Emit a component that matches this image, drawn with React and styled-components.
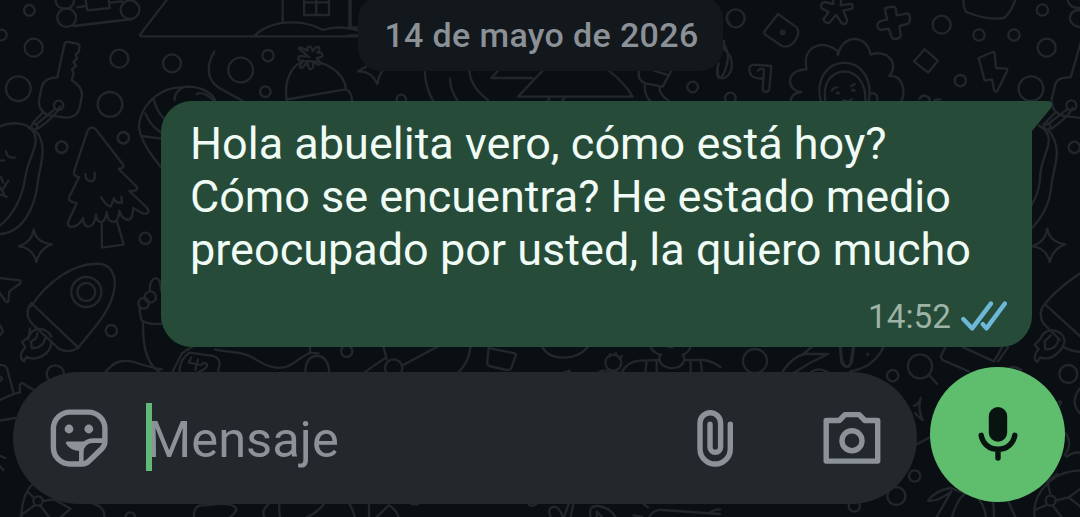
import React from 'react'
import styled, { createGlobalStyle } from 'styled-components'

const GlobalStyle = createGlobalStyle`
  * {
    box-sizing: border-box;
  }
  body {
    margin: 0;
    background: #0a0f13;
    font-family: Roboto, 'Liberation Sans', sans-serif;
  }
`

// Wallpaper patches. Each one is drawn on a grid three times finer than the page.
const patches = [
  {
    x: 0, y: 0,
    rings: [
      [88, 31, 16], [4, 105, 16], [101, 143, 27], [55, 266, 37], [358, 176, 27],
      [516, 190, 27], [722, 210, 37], [804, 167, 17], [796, 275, 16], [330, 313, 37],
      [370, 414, 17], [185, 442, 17], [200, 53, 28], [390, 29, 28], [176, 316, 14], [103, 380, 9],
    ],
    lines: [
      'M166 -4C166 16 178 26 196 26S224 12 222 -4M232 22L258 18M328 8L366 4M220 78L398 57',
      'M256 -4L262 31L329 24L326 -4',
      'M503 -4L420 104Q418 109 426 109H1078M848 -4V68M1048 -4V78M764 107Q806 66 880 67Q930 68 968 90Q1020 74 1078 92',
      'M912 -4V45H987V-4M949 -4V45M912 7H987',
      'M172 232L193 134Q195 124 206 126L231 131Q241 134 238 144L236 156L227 164L231 176L220 186L229 197L216 208L221 221L215 241Q247 260 246 286L239 324Q229 354 200 353L146 346Q114 332 117 300L126 258Q136 232 172 232Z',
      'M166 326L108 374M130 336L98 369M180 320C168 344 142 366 114 386',
      'M643 155C616 200 622 242 658 264L730 304',
      'M860 302C850 236 880 188 916 184C970 178 1034 216 1038 268M862 298L1036 268Q1056 274 1056 302',
      'M928 172L904 152Q890 144 902 142L922 152L923 142Q931 136 936 146L938 154L948 142Q962 136 957 152L952 158L964 158Q972 170 960 172L950 174L962 188Q960 200 946 190L938 186L940 202Q930 214 926 202L922 188L908 202Q894 206 902 194L910 182L898 182Q888 170 904 168L916 170',
      'M482 500C432 440 408 392 420 358C436 302 486 262 544 262C590 254 630 272 646 300M524 300C522 276 544 260 568 260M590 282C606 274 628 286 640 302M462 300Q470 334 492 356M436 340Q452 378 484 398M424 408L486 416',
    ],
  },
  {
    x: 0, y: 120,
    rings: [
      [185, 81, 17], [370, 53, 17], [436, 355, 17], [334, 632, 17], [259, 516, 45],
      [259, 516, 27], [166, 762, 26], [431, 550, 16], [451, 531, 17],
    ],
    lines: [
      'M-4 20C40 2 84 8 102 38C120 72 84 120 78 160C70 220 50 278 -4 320M112 38C144 84 118 142 114 184C106 258 70 342 -4 342M86 24L112 38',
      'M18 94Q20 114 44 113M-4 122L12 121M2 170L10 188M25 182L8 208M-4 196L12 222M20 230L2 224',
      'M263 32Q275 14 289 30L368 132Q376 144 356 147L408 198Q420 214 388 213L440 262Q454 282 430 281L399 264Q400 290 388 299Q366 302 358 272Q356 304 341 306Q322 306 320 276Q316 306 301 306Q290 304 288 284Q284 318 265 320Q249 318 249 294Q236 320 213 321Q198 318 206 302L230 250L212 244Q202 238 211 224L237 172L224 166Q220 158 226 142Z',
      'M256 162Q256 184 276 184Q287 178 284 158M303 232Q318 256 332 260L342 234Q344 250 366 248L364 230',
      'M305 310L306 383L371 374L351 304',
      'M101 328Q108 368 156 373Q120 384 109 426Q98 382 56 379Q96 366 101 328Z',
      'M-4 474L60 481Q66 486 58 492L28 514L25 544Q20 550 14 540L-4 514M-4 614Q8 622 8 636L-4 650',
      'M94 558C140 488 222 424 304 432C344 440 350 486 340 520C326 582 276 630 235 683L94 549Q70 582 97 612L176 686Q208 702 235 683',
      'M154 650C140 620 94 616 84 658L87 650L66 666L76 682C58 700 60 718 72 724L80 710C100 724 150 710 155 666M87 648L90 626M95 684L93 664C104 660 112 652 112 640M95 684Q128 688 137 652',
      'M418 562L423 598Q440 616 486 611M429 604C428 670 436 730 478 756M450 514C446 482 468 460 480 486L484 514',
      'M312 762C344 716 378 716 420 732Q458 744 486 748',
    ],
  },
  {
    x: 0, y: 350,
    rings: [[1040, 4, 17], [114, 453, 14], [391, 501, 14]],
    lines: [
      'M-4 46Q18 42 22 58L40 126M-4 78Q16 84 -4 96M-4 152Q50 126 60 128Q54 84 80 108L102 120M-4 212L46 204M-4 316L16 324M-4 344L10 360',
      'M64 505C64 450 80 420 98 402M102 444L84 426M128 453L162 448M104 466L62 496M120 466L150 505M280 462Q314 468 314 505M162 448L212 476L178 505',
      'M582 505Q578 462 614 466Q704 452 710 480Q700 496 684 505M806 462Q780 484 796 505M838 462Q836 492 842 505M972 462Q948 492 914 505M1048 462Q1062 484 1064 505',
      'M516 68L546 10L580 -12M568 8L640 18Q662 26 658 44L654 68M568 8Q540 26 538 66M645 -2C690 10 726 2 760 24C806 54 848 70 896 28L930 8M916 68C916 34 928 20 948 18Q984 16 988 68M930 8V-8M930 8L956 10',
      'M574 22L566 38L596 44M594 28L586 60M602 46Q612 34 620 42Q628 52 596 66L618 72',
    ],
  },
  {
    x: 360, y: 330,
    rings: [[101, 114, 26], [760, 98, 24]],
    lines: [
      'M12 128L78 82M70 48L80 88M128 106L236 48M332 48Q326 100 294 128M386 54L464 70Q470 74 466 80L454 114Q450 122 440 120L388 108Q380 106 382 94Z',
      'M546 50C570 94 648 94 684 50M714 128Q730 114 776 128M606 130L628 122L632 130M748 80L750 72M764 76L768 68M778 86L786 78',
      'M784 128Q802 94 840 92L900 90M872 50Q882 72 904 74M992 50Q986 68 970 74M900 76Q890 104 928 114Q966 118 974 88L968 74M922 50L938 52M974 90H1032Q1064 96 1082 112M860 92L856 128M890 96V128M992 92V128M1022 94L1026 128',
      'M27 522V561M50 561L86 526Q110 540 116 561M154 522L174 523M506 524L518 528L530 522M572 561Q560 534 582 530Q598 530 608 561M626 522L612 561M640 522L632 561M692 561Q684 526 714 528Q750 532 766 561M710 561V544L726 561M820 556L846 561M850 522L864 532M868 561Q880 538 908 540L1080 552M1050 548Q1060 538 1080 538',
    ],
  },
  {
    x: 350, y: 0,
    rings: [[1028, 261, 16], [154, 298, 14]],
    lines: [
      'M2 -4V80M-4 82H26M-4 106H26M24 214Q64 212 82 252Q86 226 98 212M24 214L48 200',
      'M224 212Q226 264 250 304M300 236Q300 270 324 304M358 212Q362 262 414 300M444 212L424 234H546M578 212L504 290H848Q824 248 776 212M598 292L594 304M644 292L636 304',
      'M868 212Q860 240 886 250L938 260L964 212M912 212L950 224M884 256Q884 290 902 304M928 262Q930 286 956 302M1134 38Q1126 60 1140 72M1118 128Q1142 156 1130 196Q1116 244 1104 232Q1098 220 1106 190',
    ],
  },
  {
    x: 700, y: 0,
    rings: [
      [107, 55, 27], [725, 74, 27], [837, 105, 17], [942, 105, 17], [1027, 30, 17],
      [781, 242, 17], [993, 266, 37], [91, 294, 16], [248, 97, 5],
      [1114, 316, 15], [1040, 143, 27], [1123, 442, 17], [1042, 380, 9],
    ],
    lines: [
      'M234 42L192 96Q192 102 198 106L246 138Q270 146 288 118Q300 96 290 82Z',
      'M399 -4L400 12L374 6Q358 10 366 26L386 36L370 58Q376 72 388 68L408 44L424 68Q436 80 442 62L430 32L456 26Q462 10 448 12L422 16L424 -4',
      'M556 24L580 20Q588 22 588 30L590 46L622 40Q630 44 630 56Q630 68 622 72L598 78L602 104Q602 114 592 116Q578 120 574 110L566 86L542 90Q532 88 532 76Q534 66 540 64L562 58L556 36Z',
      'M790 -4Q790 28 800 36Q860 62 912 54Q930 42 948 -4',
      'M674 148L714 182L684 218L642 184Z',
      'M836 174L878 156Q884 156 884 162L888 204L920 206Q924 208 920 216L892 272Q886 278 882 270L876 238L854 242Z',
      'M150 218Q142 194 164 194L214 198L208 266Q206 276 198 276Q188 276 188 266L190 236Q152 236 150 218ZM190 236L192 210Q184 202 174 212',
      'M72 122V148C102 168 104 216 74 234Q48 242 54 196',
      'M304 276C262 274 250 210 320 208C306 146 356 114 412 152Q414 160 414 166C424 104 500 98 512 164C560 146 600 190 568 228C604 224 620 268 604 304M304 276Q272 280 272 304',
      'M362 304C346 238 380 190 434 188C490 190 518 246 506 302M376 304C366 242 400 214 436 214C476 218 498 254 496 304M508 282Q534 274 532 300M396 272Q398 262 412 262M454 258L464 252M410 280Q414 276 418 280M456 272Q460 266 464 272M430 300Q444 308 456 298',
      'M658 296Q670 278 688 294Q690 304 686 304M704 300L720 298',
      'M1102 -4Q1106 26 1142 24M1142 30Q1108 30 1110 58Q1114 78 1142 82M1142 128L1112 232Q1066 230 1064 262L1054 300Q1056 340 1092 348L1142 354M1104 326L1042 374M1068 336L1030 374M1118 324Q1100 356 1054 386',
    ],
  },
  {
    x: 980, y: 90,
    rings: [],
    lines: [
      'M176 106Q196 116 204 136C216 170 178 210 180 270Q176 310 154 346M206 122Q222 140 226 160C240 200 216 250 214 290Q206 364 154 416',
      'M202 416Q208 456 256 463Q220 474 209 516Q198 472 156 469Q196 456 202 416Z',
      'M304 548Q240 588 194 642L304 742M194 642Q172 670 190 700L240 750',
    ],
  },
  {
    x: 840, y: 270,
    rings: [
      [240, 289, 36], [158, 317, 17], [685, 312, 27], [224, 618, 17], [169, 678, 27],
      [43, 708, 17], [632, 692, 15], [83, 253, 2],
    ],
    lines: [
      'M268 316L291 341M0 232L4 278Q22 306 36 276L42 232M130 232Q100 294 30 304',
      'M316 232L302 260Q304 268 312 272L386 304M370 232L462 274L486 232M504 232L474 274',
      'M504 296Q520 284 544 300',
      'M674 212C670 178 616 166 602 206L584 224L596 238Q574 264 592 276L600 262C636 276 670 240 674 212M616 238Q650 240 656 206M616 238L614 214L632 196M672 232Q692 244 724 246',
      'M222 408Q240 400 242 384M242 384Q232 412 248 450M248 450Q240 446 226 430M232 522L270 502M654 396Q670 390 658 408M724 350Q686 394 720 430M674 556Q700 520 676 488M680 560Q706 542 724 550',
      'M264 692Q288 660 332 654L376 670M264 692Q292 696 334 664M334 664L290 741M376 670Q350 690 336 741M418 690Q434 710 438 741M460 696L462 741M504 692L526 741M584 741C574 670 640 600 724 602M632 678L622 634L652 612M646 692L686 682L724 654M622 704L584 720M638 706L664 741M686 682L724 712',
    ],
  },
  {
    x: 560, y: 340,
    rings: [[585, 63, 36]],
    lines: [
      'M666 98Q698 48 736 42L804 42Q750 66 702 98M756 20L730 42M752 98Q774 78 806 98M842 20L846 60Q856 90 870 74L880 20',
    ],
  },
]

const Drawing = styled.svg`
  position: absolute;
  top: 0;
  left: 0;
  z-index: -1;
  fill: none;
  stroke: #22272b;
  stroke-width: 7;
  stroke-linecap: round;
  stroke-linejoin: round;
`

const Wallpaper = () =>
  <Drawing width={1080} height={517} viewBox='0 0 1080 517' aria-hidden='true'>
    {patches.map((patch, i) =>
      <g key={i} transform={`translate(${patch.x} ${patch.y}) scale(0.33333)`}>
        {patch.rings.map(([cx, cy, r], n) => <circle key={n} cx={cx} cy={cy} r={r} />)}
        {patch.lines.map((d, n) => <path key={n} d={d} />)}
      </g>
    )}
  </Drawing>

const Screen = styled.main`
  position: relative;
  z-index: 0;
  display: flex;
  flex-direction: column;
  width: 1080px;
  height: 517px;
  overflow: hidden;
`

const DateChip = styled.time`
  align-self: center;
  width: 365px;
  height: 75px;
  margin-top: -4px;
  padding: 2px 0 0 3px;
  flex: none;
  border-radius: 23px;
  background: #12181c;
  color: #8b9196;
  font-size: 34px;
  font-weight: 500;
  line-height: 75px;
  letter-spacing: 0.35px;
  text-align: center;
  white-space: nowrap;
`

const Bubble = styled.article`
  position: relative;
  display: flex;
  flex-direction: column;
  align-self: flex-end;
  width: 871px;
  height: 246px;
  margin: 30px 48px 0 0;
  padding: 16px 25px 0 29px;
  flex: none;
  border-radius: 31px 0 31px 31px;
  background: #264b38;
`

const Tail = styled.svg`
  position: absolute;
  top: 0;
  right: -21px;
  fill: #264b38;
`

const Line = styled.span`
  display: block;
  color: #f0fbf5;
  font-size: 45px;
  line-height: 53px;
  letter-spacing: ${props => props.spacing || 0}px;
  white-space: nowrap;
`

const Meta = styled.footer`
  display: flex;
  align-items: center;
  justify-content: flex-end;
  gap: 10px;
  height: 40px;
  margin-top: 20px;
  color: #9db3a6;
  font-size: 33.3px;
`

const Ticks = styled.svg`
  fill: none;
  stroke: #6db8d8;
  stroke-width: 4.4;
  stroke-linecap: round;
  stroke-linejoin: round;
`

const Composer = styled.form`
  display: flex;
  align-items: flex-start;
  gap: 13px;
  margin: 20px 15px 0 13px;
`

const Field = styled.label`
  display: flex;
  align-items: center;
  width: 904px;
  height: 132px;
  margin-top: 5px;
  padding: 0 36px 0 37px;
  border-radius: 66px;
  background: #23282c;
  color: #8c9297;
`

const Caret = styled.span`
  width: 6px;
  height: 68px;
  margin: 0 -5px 2px 38px;
  background: #62b878;
  z-index: 1;
`

const Placeholder = styled.span`
  flex: 1;
  padding-top: 3px;
  font-size: 50.7px;
  line-height: 60px;
`

const Icon = styled.svg`
  flex: none;
  margin-right: ${props => props.gap || 0}px;
  fill: none;
  stroke: currentColor;
  stroke-width: 5.4;
  stroke-linecap: round;
  stroke-linejoin: round;
  .solid {
    fill: currentColor;
    stroke: none;
  }
`

const MicButton = styled.button`
  display: flex;
  align-items: center;
  justify-content: center;
  width: 135px;
  height: 135px;
  padding: 0 0 2px;
  border: 0;
  border-radius: 50%;
  background: #5ebe6e;
  color: #07140f;
`

const StickerIcon = () =>
  <Icon width={58} height={58} viewBox='0 0 58 58'>
    <path d='M20 3.1H38.4A16.5 16.5 0 0 1 54.9 19.6V32.5C54.9 35.5 54 37.5 52 39.5L39 52C36.8 54.2 35 55 32 55H20A16.5 16.5 0 0 1 3.4 38.4V19.6A16.5 16.5 0 0 1 20 3.1Z' />
    <path d='M31.3 54V43.5C31.3 36 36.5 31.6 43 31.6H54' strokeWidth='4.6' />
    <path className='solid' d='M17.2 32.6H38L32 42C24.5 42.5 18.5 39.5 16 34.6Q15.6 32.6 17.2 32.6Z' />
    <circle className='solid' cx='19' cy='20' r='4.4' />
    <circle className='solid' cx='38.8' cy='20' r='4.4' />
  </Icon>

const ClipIcon = () =>
  <Icon width={38} height={58} viewBox='0 0 38 58' gap={89}>
    <path d='M34.3 15.3V39.9A15.15 15.15 0 0 1 4 39.9V14A10.3 10.3 0 0 1 24.6 14V38A5.3 5.3 0 0 1 14 38V15.3' />
  </Icon>

const CameraIcon = () =>
  <Icon width={58} height={54} viewBox='0 0 58 54'>
    <path d='M3.2 9.5H16.3L22 3.6H36.2L41.9 9.5H54.7V50.1H3.2Z' />
    <circle cx='29' cy='29.7' r='10' />
  </Icon>

const MicIcon = () =>
  <Icon width={40} height={56} viewBox='978 405.5 40 56'>
    <rect className='solid' x='988.8' y='406.6' width='18.4' height='34.6' rx='9.2' />
    <path d='M981.2 434.8C982.6 443 989 448.8 998 448.8S1013.4 443 1014.8 434.8M998 449V457.6' />
  </Icon>

const App = () =>
  <Screen>
    <GlobalStyle />
    <Wallpaper />
    <DateChip>14 de mayo de 2026</DateChip>
    <Bubble>
      <Tail width={22} height={32} viewBox='0 0 22 32'>
        <path d='M0 0H17Q23 1 20 7L1 30V32H0Z' />
      </Tail>
      <Line>Hola abuelita vero, cómo está hoy?</Line>
      <Line spacing={-0.04}>Cómo se encuentra? He estado medio</Line>
      <Line>preocupado por usted, la quiero mucho</Line>
      <Meta>
        14:52
        <Ticks width={46} height={30} viewBox='961.5 300 46 30'>
          <path d='M963.8 318L972.7 327.4L991.4 302.6M983.3 323.2L987 327.4L1005.3 302.6' />
        </Ticks>
      </Meta>
    </Bubble>
    <Composer>
      <Field>
        <StickerIcon />
        <Caret />
        <Placeholder>Mensaje</Placeholder>
        <ClipIcon />
        <CameraIcon />
      </Field>
      <MicButton type='button' aria-label='Mensaje de voz'>
        <MicIcon />
      </MicButton>
    </Composer>
  </Screen>

export default App
